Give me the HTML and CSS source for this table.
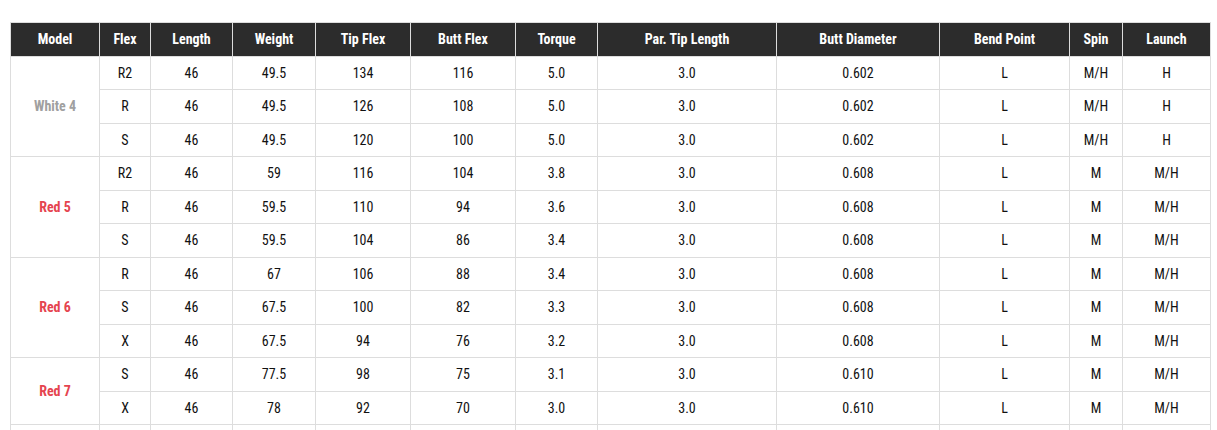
FILE: index.html
```html
<!DOCTYPE html>
<html lang="en">
<head>
<meta charset="utf-8">
<title>Shaft Specs</title>
<link rel="stylesheet" href="styles.css">
</head>
<body>
<div class="wrap">
<table class="specs">
<colgroup>
<col class="c-model"><col class="c-flex"><col class="c-length"><col class="c-weight"><col class="c-tip"><col class="c-butt"><col class="c-torque"><col class="c-par"><col class="c-dia"><col class="c-bend"><col class="c-spin"><col class="c-launch">
</colgroup>
<thead>
<tr><th>Model</th><th>Flex</th><th>Length</th><th>Weight</th><th>Tip Flex</th><th>Butt Flex</th><th>Torque</th><th>Par. Tip Length</th><th>Butt Diameter</th><th>Bend Point</th><th>Spin</th><th>Launch</th></tr>
</thead>
<tbody>
<tr><td class="model white" rowspan="3">White 4</td><td>R2</td><td>46</td><td>49.5</td><td>134</td><td>116</td><td>5.0</td><td>3.0</td><td>0.602</td><td>L</td><td>M/H</td><td>H</td></tr>
<tr><td>R</td><td>46</td><td>49.5</td><td>126</td><td>108</td><td>5.0</td><td>3.0</td><td>0.602</td><td>L</td><td>M/H</td><td>H</td></tr>
<tr><td>S</td><td>46</td><td>49.5</td><td>120</td><td>100</td><td>5.0</td><td>3.0</td><td>0.602</td><td>L</td><td>M/H</td><td>H</td></tr>
<tr><td class="model red" rowspan="3">Red 5</td><td>R2</td><td>46</td><td>59</td><td>116</td><td>104</td><td>3.8</td><td>3.0</td><td>0.608</td><td>L</td><td>M</td><td>M/H</td></tr>
<tr><td>R</td><td>46</td><td>59.5</td><td>110</td><td>94</td><td>3.6</td><td>3.0</td><td>0.608</td><td>L</td><td>M</td><td>M/H</td></tr>
<tr><td>S</td><td>46</td><td>59.5</td><td>104</td><td>86</td><td>3.4</td><td>3.0</td><td>0.608</td><td>L</td><td>M</td><td>M/H</td></tr>
<tr><td class="model red" rowspan="3">Red 6</td><td>R</td><td>46</td><td>67</td><td>106</td><td>88</td><td>3.4</td><td>3.0</td><td>0.608</td><td>L</td><td>M</td><td>M/H</td></tr>
<tr><td>S</td><td>46</td><td>67.5</td><td>100</td><td>82</td><td>3.3</td><td>3.0</td><td>0.608</td><td>L</td><td>M</td><td>M/H</td></tr>
<tr><td>X</td><td>46</td><td>67.5</td><td>94</td><td>76</td><td>3.2</td><td>3.0</td><td>0.608</td><td>L</td><td>M</td><td>M/H</td></tr>
<tr><td class="model red" rowspan="2">Red 7</td><td>S</td><td>46</td><td>77.5</td><td>98</td><td>75</td><td>3.1</td><td>3.0</td><td>0.610</td><td>L</td><td>M</td><td>M/H</td></tr>
<tr><td>X</td><td>46</td><td>78</td><td>92</td><td>70</td><td>3.0</td><td>3.0</td><td>0.610</td><td>L</td><td>M</td><td>M/H</td></tr>
<tr class="more"><td></td><td></td><td></td><td></td><td></td><td></td><td></td><td></td><td></td><td></td><td></td><td></td></tr>
</tbody>
</table>
</div>
</body>
</html>
```
FILE: styles.css
```css
html, body {
  margin: 0;
  padding: 0;
  background: #ffffff;
}
.wrap {
  padding: 22px 7px 0 10px;
}
.specs {
  width: 1200px;
  table-layout: fixed;
  border-collapse: collapse;
  font-family: "Roboto Condensed", "Liberation Sans Narrow", "DejaVu Sans Condensed", Roboto, sans-serif;
  font-size: 14px;
  color: #111111;
}
.c-model { width: 89px; }
.c-flex { width: 51px; }
.c-length { width: 82px; }
.c-weight { width: 83px; }
.c-tip { width: 95px; }
.c-butt { width: 105px; }
.c-torque { width: 82px; }
.c-par { width: 179px; }
.c-dia { width: 163px; }
.c-bend { width: 130px; }
.c-spin { width: 53px; }
.c-launch { width: 88px; }
.specs th,
.specs td {
  border: 1px solid #dddddd;
  text-align: center;
  vertical-align: middle;
  padding: 8px 4px;
  line-height: 16.5px;
  white-space: nowrap;
}
.specs th {
  background: #2c2c2c;
  color: #ffffff;
  font-weight: 700;
}
.specs td.model {
  font-weight: 700;
}
.specs td.white { color: #a0a0a0; }
.specs td.red { color: #e5444f; }
.specs tr.more td {
  height: 16.5px;
}
```
